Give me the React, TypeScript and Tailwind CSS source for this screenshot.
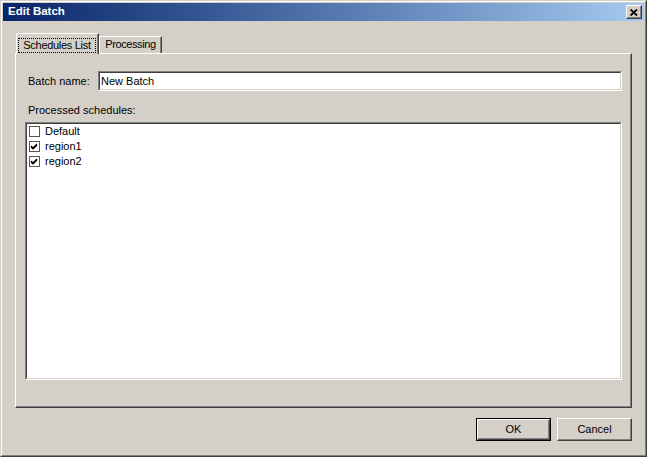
import React from 'react';

const items = [
    { name: 'Default', checked: false },
    { name: 'region1', checked: true },
    { name: 'region2', checked: true },
];

function CheckBox({ checked }: { checked: boolean }) {
    return (
        <span className="w-[11px] h-[11px] border border-[#555] bg-white flex items-center justify-center shrink-0">
            {checked && (
                <svg width="9" height="9" viewBox="0 0 9 9">
                    <path d="M1 4 L3 6 L7 2 M1 5 L3 7 L7 3" stroke="#000" strokeWidth="1.2" fill="none" />
                </svg>
            )}
        </span>
    );
}

function Button({ label, isDefault }: { label: string; isDefault?: boolean }) {
    return (
        <div className={isDefault ? 'border border-black' : ''}>
            <div
                className={`${isDefault ? 'w-[73px] h-[21px]' : 'w-[75px] h-[23px]'} border border-t-white border-l-white border-r-[#404040] border-b-[#404040] shadow-[inset_-1px_-1px_0_#808080] flex items-center justify-center text-[11px] text-black`}
            >
                {label}
            </div>
        </div>
    );
}

export default function App() {
    return (
        <div
            className="w-[647px] h-[457px] bg-[#d4d0c8] text-black"
            style={{ fontFamily: '"Liberation Sans", Arial, sans-serif' }}
        >
            <div className="h-full border border-t-[#d4d0c8] border-l-[#d4d0c8] border-r-[#404040] border-b-[#404040]">
                <div className="h-full border border-t-white border-l-white border-r-[#808080] border-b-[#808080] p-px flex flex-col">
                    {/* Title bar */}
                    <div className="h-[18px] shrink-0 flex items-center justify-between bg-gradient-to-r from-[#0a246a] to-[#a6caf0] pl-[5px] pr-[2px]">
                        <span className="text-white font-bold text-[11.5px] leading-none">Edit Batch</span>
                        <div className="w-[16px] h-[14px] bg-[#d4d0c8] border border-t-white border-l-white border-r-[#404040] border-b-[#404040] shadow-[inset_-1px_-1px_0_#808080] flex items-center justify-center">
                            <svg width="8" height="7" viewBox="0 0 8 7">
                                <path d="M0.5 0.5 L7 6.5 M7 0.5 L0.5 6.5" stroke="#000" strokeWidth="1.8" />
                            </svg>
                        </div>
                    </div>

                    {/* Body */}
                    <div className="flex-1 flex flex-col px-[12px] pt-[12px]">
                        {/* Tabs */}
                        <div className="h-[20px] flex items-end relative z-10">
                            <div className="ml-px w-[83px] h-[21px] -mb-px bg-[#d4d0c8] border-l border-t border-white border-r border-r-[#404040] rounded-tl-[2px] shadow-[inset_-1px_0_0_#808080] pt-[4px] px-px">
                                <div className="h-[15px] border border-dotted border-black flex items-center justify-center text-[11px] tracking-[-0.3px] leading-none mr-px">
                                    Schedules List
                                </div>
                            </div>
                            <div className="w-[63px] h-[17px] border-l border-t border-white border-r border-r-[#404040] rounded-tl-[2px] shadow-[inset_-1px_0_0_#808080] flex items-center justify-center text-[11px] tracking-[-0.4px] leading-none pb-[2px]">
                                Processing
                            </div>
                        </div>

                        {/* Panel */}
                        <div className="h-[355px] border border-t-white border-l-white border-r-[#404040] border-b-[#404040] shadow-[inset_-1px_-1px_0_#808080] flex flex-col">
                            <div className="flex items-center mt-[17px] pl-[12px]">
                                <span className="w-[70px] text-[11px]">Batch name:</span>
                                <div className="w-[524px] h-[20px] border border-t-[#808080] border-l-[#808080] border-r-white border-b-white">
                                    <div className="h-full border border-t-[#404040] border-l-[#404040] border-r-[#d4d0c8] border-b-[#d4d0c8] bg-white flex items-center pl-[1px] text-[11px]">
                                        New Batch
                                    </div>
                                </div>
                            </div>

                            <div className="mt-[13px] pl-[12px] text-[11px] leading-[13px]">Processed schedules:</div>

                            <div className="mt-[5px] ml-[9px] w-[597px] h-[258px] border border-t-[#808080] border-l-[#808080] border-r-white border-b-white">
                                <div className="h-full border border-t-[#404040] border-l-[#404040] border-r-[#d4d0c8] border-b-[#d4d0c8] bg-white pl-[2px]">
                                    {items.map((item) => (
                                        <div key={item.name} className="h-[15px] flex items-center gap-[5px] text-[11px]">
                                            <CheckBox checked={item.checked} />
                                            <span>{item.name}</span>
                                        </div>
                                    ))}
                                </div>
                            </div>
                        </div>

                        {/* Buttons */}
                        <div className="mt-[10px] flex justify-end gap-[6px]">
                            <Button label="OK" isDefault />
                            <Button label="Cancel" />
                        </div>
                    </div>
                </div>
            </div>
        </div>
    );
}
